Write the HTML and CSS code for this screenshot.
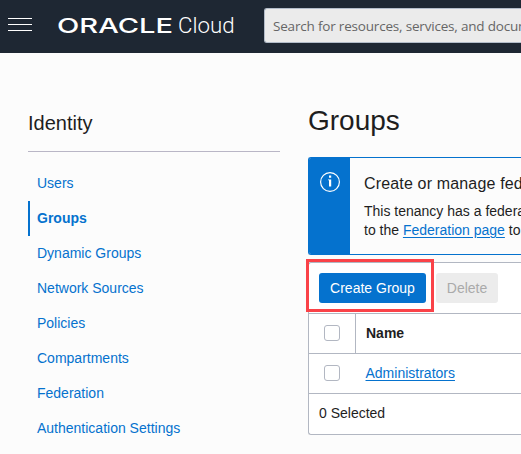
FILE: index.html
```html
<!DOCTYPE html>
<html lang="en">
<head>
<meta charset="utf-8">
<title>Groups - Oracle Cloud</title>
<link rel="stylesheet" href="styles.css">
</head>
<body>
<header class="topbar">
  <div class="menu"><span></span><span></span><span></span></div>
  <svg class="logo" width="182" height="30" viewBox="0 0 182 30">
    <text class="logo-oracle" x="1" y="22" textLength="116" lengthAdjust="spacingAndGlyphs">ORACLE</text>
    <text class="logo-cloud" x="122" y="22" textLength="56.5" lengthAdjust="spacingAndGlyphs">Cloud</text>
  </svg>
  <div class="search">Search for resources, services, and docum</div>
</header>
<div class="page">
  <aside class="sidebar">
    <h2>Identity</h2>
    <nav>
      <a>Users</a>
      <a class="active">Groups</a>
      <a>Dynamic Groups</a>
      <a>Network Sources</a>
      <a>Policies</a>
      <a>Compartments</a>
      <a>Federation</a>
      <a>Authentication Settings</a>
    </nav>
  </aside>
  <main class="content">
    <h1>Groups</h1>
    <section class="banner">
      <div class="banner-icon">
        <svg width="22" height="22" viewBox="0 0 22 22">
          <circle cx="11" cy="11" r="9.4" fill="none" stroke="#fff" stroke-width="1.2"/>
          <path d="M10 4.5h2.2v2.2H10zM9 8.5h3.2v7H10V9.3H9z" fill="#fff"/>
        </svg>
      </div>
      <div class="banner-text">
        <h3>Create or manage fed</h3>
        <p>This tenancy has a federa</p>
        <p>to the <a>Federation page</a> to</p>
      </div>
    </section>
    <section class="table">
      <div class="toolbar">
        <button class="primary">Create Group</button>
        <button class="disabled">Delete</button>
        <div class="highlight"></div>
      </div>
      <div class="row head"><div class="check"><i></i></div><div class="cell">Name</div></div>
      <div class="row"><div class="check"><i></i></div><div class="cell"><a>Administrators</a></div></div>
      <div class="foot">0 Selected</div>
    </section>
  </main>
</div>
</body>
</html>
```
FILE: styles.css
```css
* { box-sizing: border-box; }
body {
  margin: 0;
  width: 521px;
  height: 454px;
  overflow: hidden;
  background: #fcfcfc;
  color: #1e1e1e;
  font: 14px/19px "Liberation Sans", Arial, sans-serif;
}
h1, h2, h3, p { margin: 0; font-weight: 400; }

.topbar {
  display: flex;
  height: 53px;
  padding-left: 8px;
  background: #1e2733;
  overflow: hidden;
}
.menu {
  flex: none;
  display: flex;
  flex-direction: column;
  gap: 5px;
  width: 24px;
  padding-top: 18px;
}
.menu span { height: 1px; background: #fff; }
.logo { flex: none; margin: 11px 0 0 24px; }
.logo text { fill: #fff; }
.logo-oracle { font: 500 20.5px Inter, sans-serif; }
.logo-cloud { font: 300 22.5px Roboto, sans-serif; }
.search {
  flex: 1;
  min-width: 0;
  height: 35px;
  margin: 8px 0 0 26px;
  padding-left: 8px;
  border: 1px solid #b3bcc9;
  border-right: 0;
  border-radius: 3px 0 0 3px;
  background: #ebebeb;
  color: #666;
  font: 13.5px/35px "Open Sans", sans-serif;
  letter-spacing: -0.19px;
  white-space: nowrap;
  overflow: hidden;
}

.page { display: flex; gap: 28px; padding-left: 28px; }
.sidebar { flex: none; width: 252px; }
.sidebar h2 {
  height: 99px;
  padding-top: 58px;
  border-bottom: 1px solid #b9b6c6;
  font-size: 20px;
  line-height: 24px;
}
.sidebar nav { display: flex; flex-direction: column; padding-top: 14px; }
.sidebar nav a {
  height: 35px;
  padding-left: 7px;
  border-left: 2px solid transparent;
  color: #0572ce;
  line-height: 34px;
}
.sidebar nav .active { border-color: #0572ce; font-weight: 700; }

.content { flex: 1; min-width: 0; white-space: nowrap; }
h1 { height: 104px; padding-top: 52px; font-size: 28px; line-height: 32px; }

.banner {
  display: flex;
  height: 98px;
  border: 1px solid #0572ce;
  border-right: 0;
  border-radius: 3px 0 0 3px;
  overflow: hidden;
}
.banner-icon { flex: none; width: 41px; padding: 13px 0 0 10px; background: #0572ce; }
.banner-text { padding: 16px 0 0 14px; }
.banner h3 { height: 28px; font-size: 16px; line-height: 20px; letter-spacing: 0.16px; }
.banner a, .table a { color: #0572ce; text-decoration: underline; text-underline-offset: 2px; }

.table {
  margin-top: 7px;
  border: 1px solid #b2b7c2;
  border-right: 0;
  border-radius: 3px 0 0 3px;
  background: #fff;
}
.toolbar {
  position: relative;
  display: flex;
  gap: 10px;
  height: 51px;
  padding: 10px;
  border-bottom: 1px solid #b2b7c2;
}
button {
  height: 30px;
  padding: 0;
  border: 0;
  border-radius: 3px;
  font: 14px "Liberation Sans", Arial, sans-serif;
}
.primary { width: 107px; background: #0572ce; color: #fff; }
.disabled { width: 62px; background: #ececec; color: #aaa; }
.highlight {
  position: absolute;
  left: -3px;
  top: -4px;
  width: 128px;
  height: 53px;
  border: 3px solid #fa4248;
}
.row { display: flex; height: 40px; border-bottom: 1px solid #b2b7c2; line-height: 39px; }
.check { width: 47px; padding: 11px 0 0 15px; border-right: 1px solid transparent; }
.head .check { border-color: #b2b7c2; }
.check i { display: block; width: 16px; height: 16px; border: 1px solid #b2b7c2; border-radius: 3px; background: #fff; }
.cell { padding-left: 9.5px; }
.head .cell { padding-left: 10px; font-weight: 700; }
.foot { height: 40px; padding-left: 10px; line-height: 39px; }
```
